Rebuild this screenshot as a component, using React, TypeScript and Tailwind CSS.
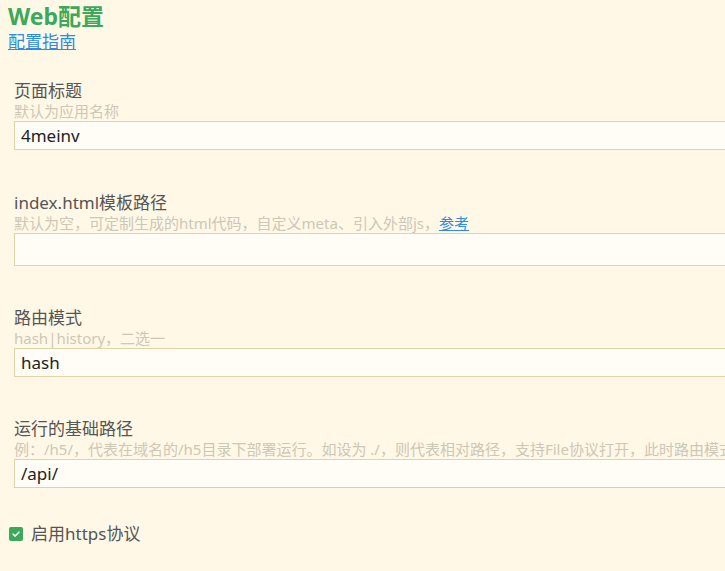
import React from 'react';

const font = { fontFamily: '"Noto Sans", "Noto Sans CJK SC", sans-serif' };

type FieldProps = {
    label: string;
    hint: React.ReactNode;
    value: string;
    tall?: boolean;
    className?: string;
};

function Field({ label, hint, value, tall, className }: FieldProps) {
    return (
        <div className={className}>
            <div className="text-[17px] leading-[21px] text-[#555555]">{label}</div>
            <div className="text-[15px] leading-[20px] text-[#cdc7b6] whitespace-nowrap">{hint}</div>
            <input
                type="text"
                defaultValue={value}
                className={`block w-[760px] ${tall ? 'h-[33px]' : 'h-[29px]'} px-[6px] border border-[#e0d3a6] bg-[#fffdf5] text-[17px] text-[#222222] outline-none`}
                style={font}
            />
        </div>
    );
}

export default function App() {
    return (
        <div className="w-[725px] h-[571px] overflow-hidden bg-[#fff8e6] px-[8px]" style={font}>
            <h1 className="pt-[2px] text-[23px] leading-[28px] font-bold text-[#3aa95a]">Web配置</h1>
            <a href="#" className="block mt-[1px] text-[17px] leading-[21px] text-[#2d8ae6] underline w-fit">
                配置指南
            </a>

            <div className="pl-[6px]">
                <Field className="mt-[28px]" label="页面标题" hint="默认为应用名称" value="4meinv" />
                <Field
                    className="mt-[42px]"
                    label="index.html模板路径"
                    hint={
                        <>
                            默认为空，可定制生成的html代码，自定义meta、引入外部js，
                            <a href="#" className="text-[#2d8ae6] underline">参考</a>
                        </>
                    }
                    value=""
                    tall
                />
                <Field className="mt-[41px]" label="路由模式" hint="hash|history，二选一" value="hash" />
                <Field
                    className="mt-[41px]"
                    label="运行的基础路径"
                    hint="例：/h5/，代表在域名的/h5目录下部署运行。如设为 ./，则代表相对路径，支持File协议打开，此时路由模式强制为hash模式。"
                    value="/api/"
                />
            </div>

            {/* checkbox */}
            <label className="mt-[35px] flex items-center gap-[8px] text-[17px] leading-[22px] text-[#555555]">
                <span className="ml-[1px] w-[14px] h-[14px] rounded-[2px] bg-[#3aa95a] flex items-center justify-center">
                    <svg viewBox="0 0 12 12" className="w-[10px] h-[10px]" fill="none" stroke="white" strokeWidth="1.8">
                        <path d="M2.5 6.2 L5 8.5 L9.5 3.8" strokeLinecap="round" strokeLinejoin="round" />
                    </svg>
                </span>
                启用https协议
            </label>
        </div>
    );
}
